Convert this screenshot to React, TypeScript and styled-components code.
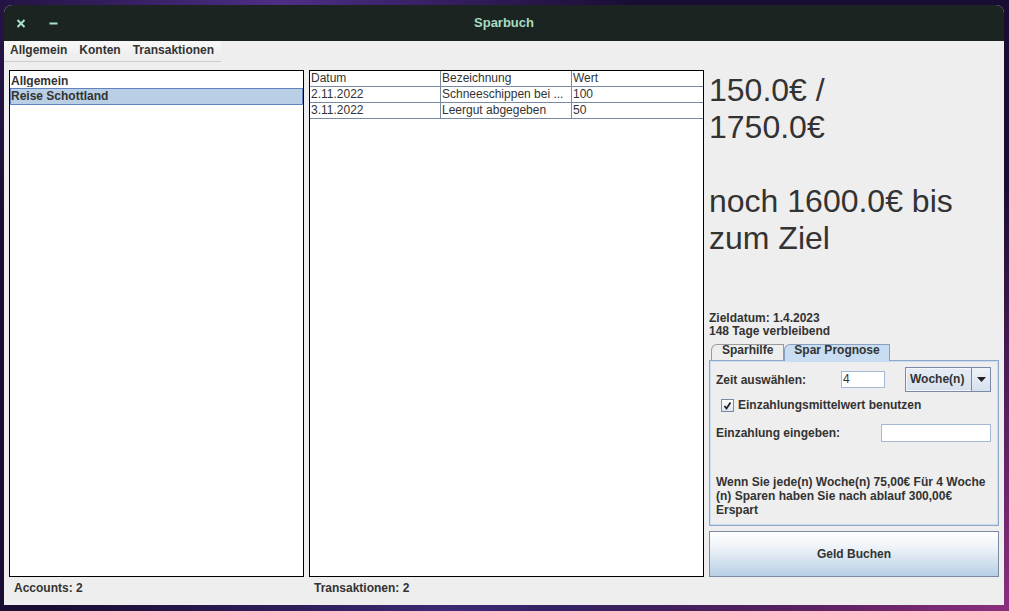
import React from "react";
import styled, { createGlobalStyle } from "styled-components";

const Global = createGlobalStyle`
  html, body { margin: 0; padding: 0; width: 1009px; height: 611px; overflow: hidden; }
  body {
    font-family: "Liberation Sans", Arial, sans-serif;
    background:
      radial-gradient(ellipse 45% 70% at 100% 100%, #8b2f7e 0%, rgba(139,47,126,0) 100%),
      radial-gradient(ellipse 35% 60% at 28% 0%, #4d2e86 0%, rgba(77,46,134,0) 100%),
      radial-gradient(ellipse 40% 60% at 45% 100%, #3b2a74 0%, rgba(59,42,116,0) 100%),
      #190d33;
  }
`;

const Desktop = styled.div`
  width: 1009px;
  height: 611px;
  box-sizing: border-box;
  padding: 5px 5px 6px 4px;
  display: flex;
`;

const Window = styled.div`
  flex: 1;
  display: flex;
  flex-direction: column;
  border-radius: 8px 8px 0 0;
  overflow: hidden;
  background: #eeeeee;
  color: #333333;
`;

const TitleBar = styled.div`
  height: 36px;
  flex: none;
  background: #1c2421;
  display: grid;
  grid-template-columns: 1fr auto 1fr;
  align-items: center;
`;

const TitleButtons = styled.div`
  display: flex;
  align-items: center;
  padding-left: 12px;
  gap: 23px;
`;

const TitleText = styled.div`
  font-size: 13px;
  font-weight: bold;
  color: #a6dcc4;
  margin-top: -1px;
`;

const Content = styled.div`
  flex: 1;
  display: flex;
  flex-direction: column;
`;

const MenuBar = styled.div`
  width: 217px;
  height: 20px;
  display: flex;
  background: linear-gradient(#f7f7f7, #ececec);
  border-bottom: 1px solid #cdcdcd;
`;

const MenuItem = styled.div`
  font-size: 12px;
  font-weight: bold;
  line-height: 19px;
  padding: 0 6px;
`;

const Main = styled.div`
  margin-top: 8px;
  padding-left: 5px;
  display: grid;
  grid-template-columns: 295px 395px 290px;
  grid-template-rows: 507px 28px;
  column-gap: 5px;
`;

const ListBox = styled.div`
  border: 1px solid #000;
  background: #fff;
`;

const ListItem = styled.div<{ $selected?: boolean; $first?: boolean }>`
  height: 17px;
  box-sizing: border-box;
  border: 1px solid ${(p) => (p.$selected ? "#6382bf" : "transparent")};
  background: ${(p) => (p.$selected ? "#b8cfe5" : "transparent")};
  padding-top: ${(p) => (p.$first ? "2px" : "0")};
  font-size: 12px;
  font-weight: bold;
  line-height: 15px;
  white-space: nowrap;
  overflow: hidden;
`;

const TableBox = styled.div`
  border: 1px solid #000;
  background: #fff;
`;

const TableRow = styled.div`
  display: grid;
  grid-template-columns: 131px 131px 131px;
`;

const Cell = styled.div<{ $last?: boolean }>`
  height: 16px;
  box-sizing: border-box;
  border-bottom: 1px solid #7a8aa5;
  border-right: ${(p) => (p.$last ? "none" : "1px solid #7a8aa5")};
  padding-left: 1px;
  font-size: 12px;
  line-height: 15px;
  white-space: nowrap;
  overflow: hidden;
`;

const RightPanel = styled.div`
  display: flex;
  flex-direction: column;
`;

const BigText = styled.div`
  margin-top: 2px;
  height: 185px;
  font-size: 32px;
  line-height: 37px;
  white-space: nowrap;
`;

const Info = styled.div`
  margin-top: 55px;
  font-size: 12px;
  font-weight: bold;
  line-height: 13px;
`;

const TabStrip = styled.div`
  margin-top: 6px;
  height: 16px;
  padding-left: 2px;
  display: flex;
  align-items: flex-end;
  position: relative;
  z-index: 1;
`;

const Tab = styled.div<{ $active?: boolean }>`
  box-sizing: border-box;
  border: 1px solid ${(p) => (p.$active ? "#8aa0c0" : "#9a9a9a")};
  border-bottom: none;
  border-top-left-radius: 6px;
  background: ${(p) => (p.$active ? "#c8ddf2" : "#eeeeee")};
  padding: ${(p) => (p.$active ? "0 9px 0 9px" : "0 10px")};
  font-size: 12px;
  font-weight: bold;
  line-height: 11px;
  margin-bottom: ${(p) => (p.$active ? "-1px" : "0")};
  height: ${(p) => (p.$active ? "17px" : "16px")};
`;

const TabPanel = styled.div`
  height: 166px;
  box-sizing: border-box;
  border: 1px solid #8fa8c9;
  box-shadow: inset 0 0 0 1px #c8ddf2;
  padding: 6px 0 0 6px;
  display: flex;
  flex-direction: column;
`;

const FormRow = styled.div<{ $h: number; $mt: number }>`
  height: ${(p) => p.$h}px;
  margin-top: ${(p) => p.$mt}px;
  display: flex;
  align-items: center;
`;

const Label = styled.div<{ $w?: number }>`
  width: ${(p) => (p.$w ? `${p.$w}px` : "auto")};
  flex: none;
  font-size: 12px;
  font-weight: bold;
  line-height: 14px;
  white-space: nowrap;
`;

const TextField = styled.div<{ $w: number; $h: number }>`
  width: ${(p) => p.$w}px;
  height: ${(p) => p.$h}px;
  box-sizing: border-box;
  border: 1px solid #a3b9d4;
  background: #fff;
  padding-left: 1px;
  font-size: 12px;
  line-height: 15px;
`;

const Combo = styled.div`
  margin-left: 20px;
  width: 86px;
  height: 25px;
  box-sizing: border-box;
  border: 1px solid #7a8aa5;
  display: flex;
  background: linear-gradient(#e6edf5, #d6e1ed);
`;

const ComboText = styled.div`
  flex: 1;
  font-size: 12px;
  font-weight: bold;
  line-height: 21px;
  padding-left: 3px;
  border: 1px solid #f4f7fb;
  border-right: none;
`;

const ComboArrow = styled.div`
  width: 18px;
  border-left: 1px solid #7a8aa5;
  display: flex;
  align-items: center;
  justify-content: center;
  background: linear-gradient(#eef3f8, #d6e1ed);
`;

const CheckRow = styled.div`
  height: 20px;
  margin-top: 3px;
  padding-left: 5px;
  display: flex;
  align-items: center;
  gap: 4px;
`;

const CheckBox = styled.div`
  width: 13px;
  height: 13px;
  box-sizing: border-box;
  border: 1px solid #7a8aa5;
  background: linear-gradient(#ffffff, #dbe6f2);
  display: flex;
  align-items: center;
  justify-content: center;
`;

const Paragraph = styled.div`
  margin-top: 33px;
  font-size: 12px;
  font-weight: bold;
  line-height: 14px;
  white-space: nowrap;
`;

const Button = styled.div`
  margin-top: 5px;
  height: 46px;
  box-sizing: border-box;
  border: 1px solid #7a8aa5;
  background: linear-gradient(#ffffff 0%, #eef3f8 35%, #b8cfe5 100%);
  display: flex;
  align-items: center;
  justify-content: center;
  font-size: 12px;
  font-weight: bold;
`;

const Footer = styled.div`
  padding: 4px 0 0 5px;
  font-size: 12px;
  font-weight: bold;
  line-height: 14px;
`;

export default function App() {
  return (
    <>
      <Global />
      <Desktop>
        <Window>
          <TitleBar>
            <TitleButtons>
              <svg width="10" height="9" viewBox="0 0 10 9">
                <path d="M1.5 1 L8.5 8 M8.5 1 L1.5 8" stroke="#a6e3c8" strokeWidth="2" />
              </svg>
              <svg width="9" height="9" viewBox="0 0 9 9">
                <rect x="0.5" y="3.5" width="8" height="2" fill="#a6e3c8" />
              </svg>
            </TitleButtons>
            <TitleText>Sparbuch</TitleText>
            <div />
          </TitleBar>
          <Content>
            <MenuBar>
              <MenuItem>Allgemein</MenuItem>
              <MenuItem>Konten</MenuItem>
              <MenuItem>Transaktionen</MenuItem>
            </MenuBar>
            <Main>
              <ListBox>
                <ListItem $first>Allgemein</ListItem>
                <ListItem $selected>Reise Schottland</ListItem>
              </ListBox>
              <TableBox>
                <TableRow>
                  <Cell>Datum</Cell>
                  <Cell>Bezeichnung</Cell>
                  <Cell $last>Wert</Cell>
                </TableRow>
                <TableRow>
                  <Cell>2.11.2022</Cell>
                  <Cell>Schneeschippen bei ...</Cell>
                  <Cell $last>100</Cell>
                </TableRow>
                <TableRow>
                  <Cell>3.11.2022</Cell>
                  <Cell>Leergut abgegeben</Cell>
                  <Cell $last>50</Cell>
                </TableRow>
              </TableBox>
              <RightPanel>
                <BigText>
                  150.0€ /<br />
                  1750.0€<br />
                  <br />
                  noch 1600.0€ bis<br />
                  zum Ziel
                </BigText>
                <Info>
                  Zieldatum: 1.4.2023<br />
                  148 Tage verbleibend
                </Info>
                <TabStrip>
                  <Tab>Sparhilfe</Tab>
                  <Tab $active>Spar Prognose</Tab>
                </TabStrip>
                <TabPanel>
                  <FormRow $h={25} $mt={0}>
                    <Label $w={125}>Zeit auswählen:</Label>
                    <TextField $w={44} $h={17}>4</TextField>
                    <Combo>
                      <ComboText>Woche(n)</ComboText>
                      <ComboArrow>
                        <svg width="9" height="5" viewBox="0 0 9 5">
                          <path d="M0 0 L9 0 L4.5 5 Z" fill="#222" />
                        </svg>
                      </ComboArrow>
                    </Combo>
                  </FormRow>
                  <CheckRow>
                    <CheckBox>
                      <svg width="11" height="11" viewBox="0 0 11 11">
                        <path d="M2.5 6 L4.5 8.5 L8.5 2.5" stroke="#222" strokeWidth="1.8" fill="none" />
                      </svg>
                    </CheckBox>
                    <Label>Einzahlungsmittelwert benutzen</Label>
                  </CheckRow>
                  <FormRow $h={18} $mt={9}>
                    <Label $w={165}>Einzahlung eingeben:</Label>
                    <TextField $w={110} $h={18} />
                  </FormRow>
                  <Paragraph>
                    Wenn Sie jede(n) Woche(n) 75,00€ Für 4 Woche<br />
                    (n) Sparen haben Sie nach ablauf 300,00€<br />
                    Erspart
                  </Paragraph>
                </TabPanel>
                <Button>Geld Buchen</Button>
              </RightPanel>
              <Footer>Accounts: 2</Footer>
              <Footer>Transaktionen: 2</Footer>
              <div />
            </Main>
          </Content>
        </Window>
      </Desktop>
    </>
  );
}
